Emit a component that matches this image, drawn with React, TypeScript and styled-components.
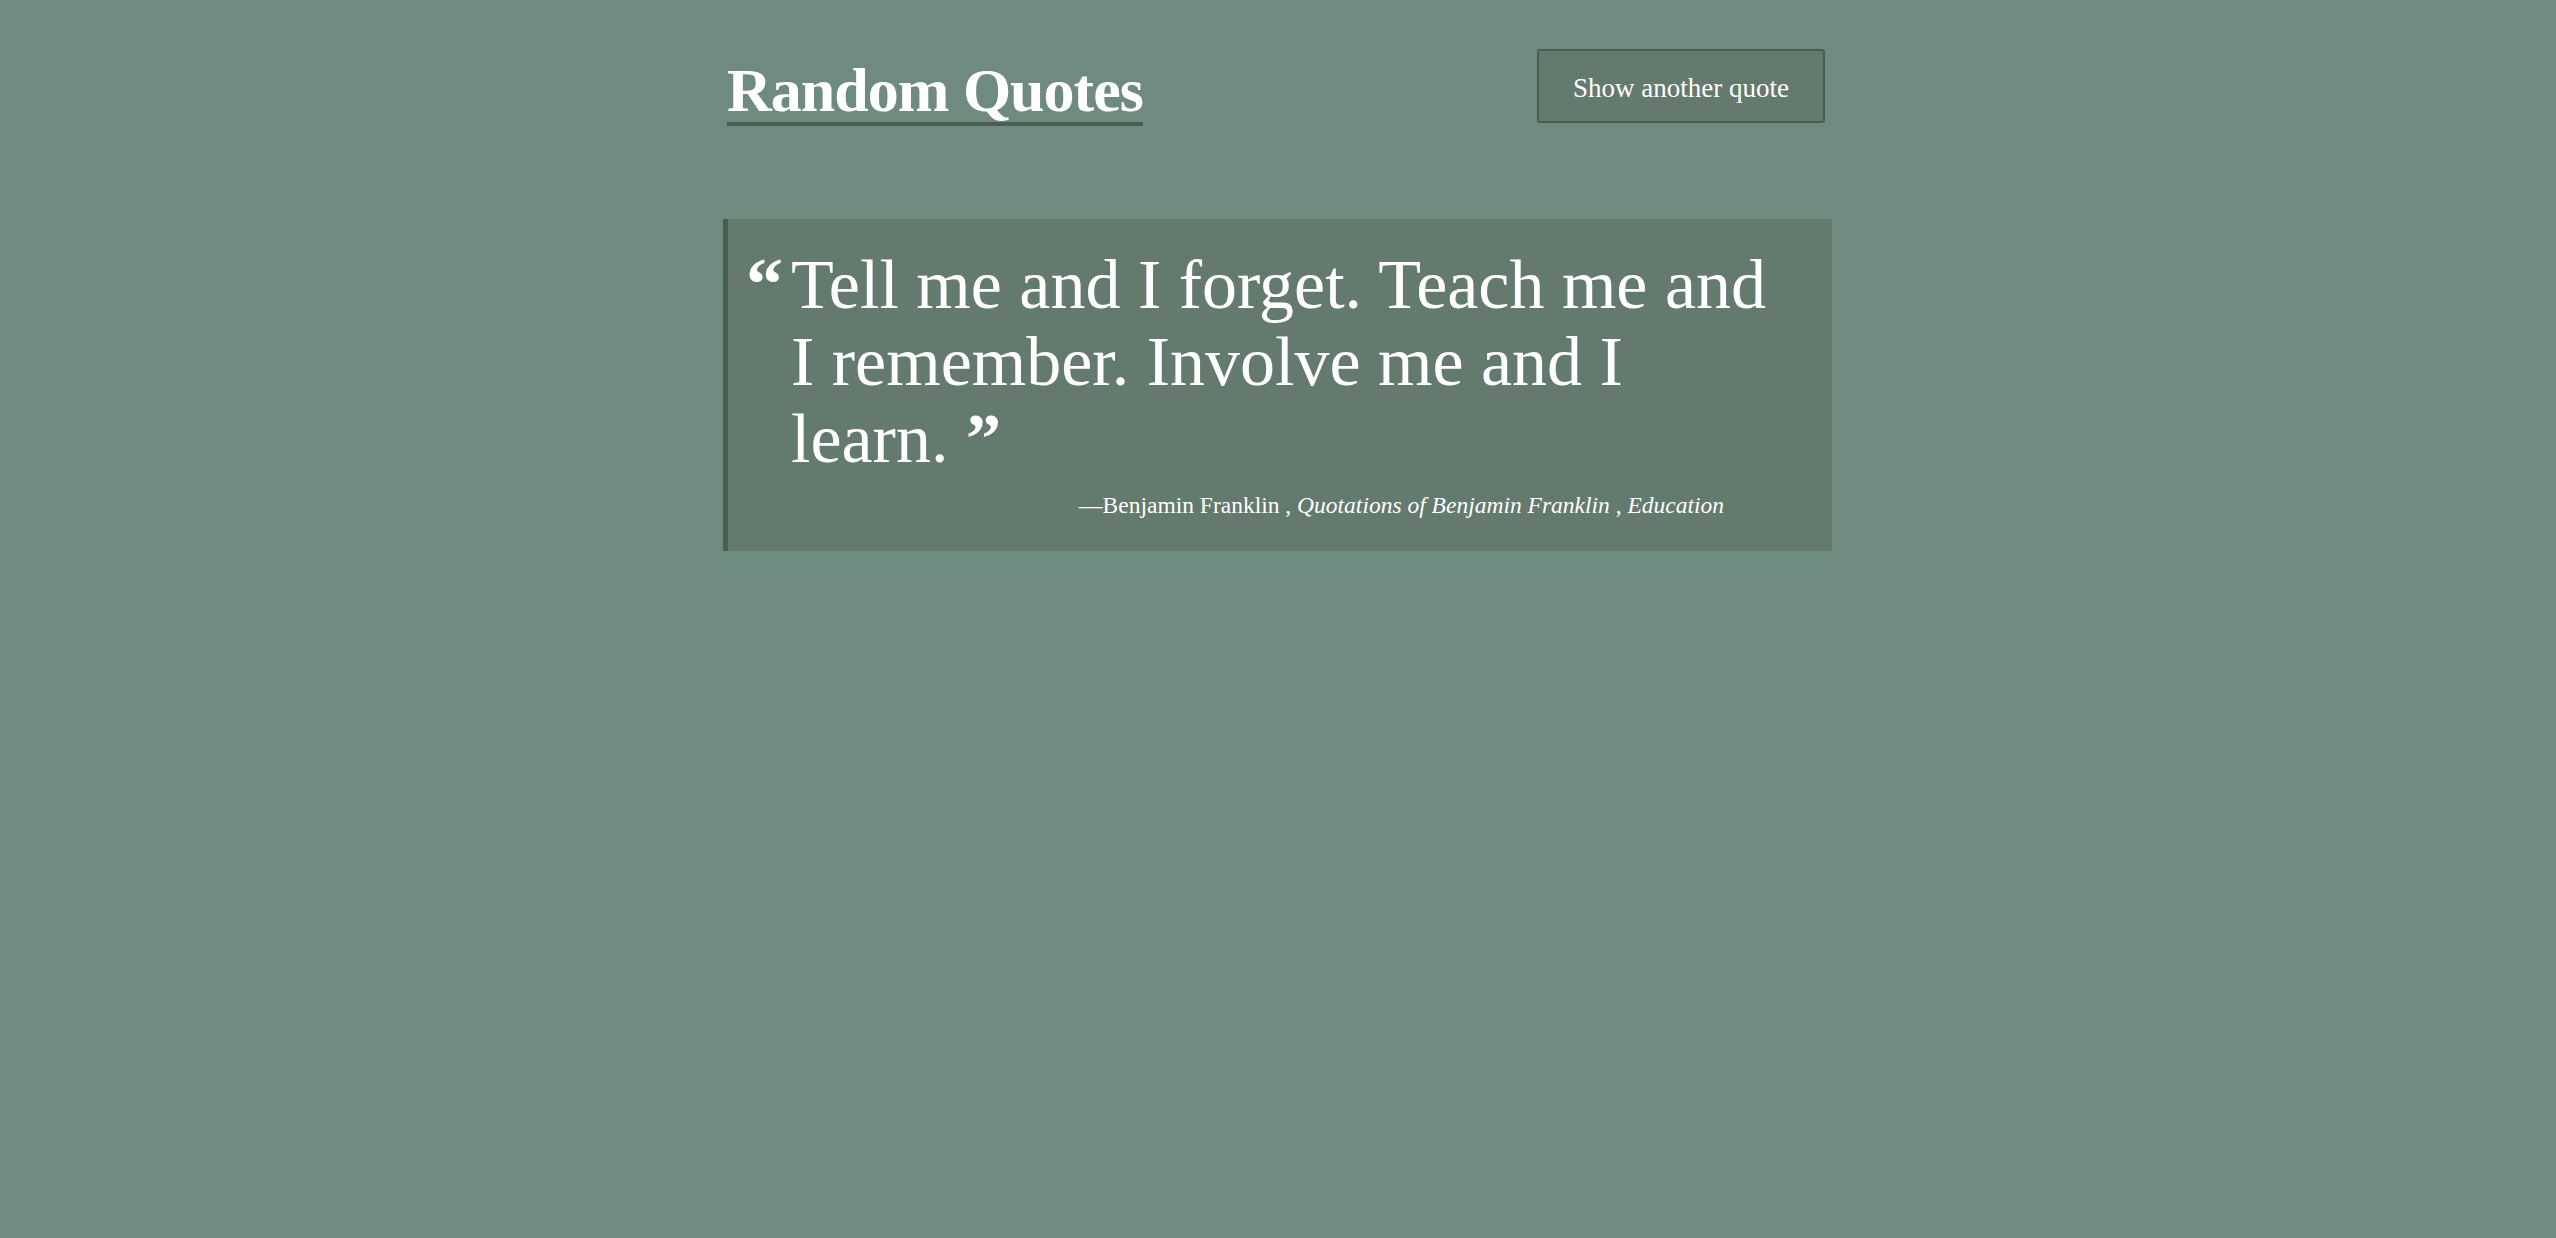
import React from "react";
import styled, { createGlobalStyle } from "styled-components";

const GlobalStyle = createGlobalStyle`
  html, body {
    margin: 0;
    padding: 0;
    background: #6f8a7e;
  }
  body {
    font-family: "Liberation Serif", "Times New Roman", serif;
    color: #ffffff;
  }
`;

const Page = styled.div`
  min-height: 1238px;
  background: #6f8a7e;
  padding-top: 49px;
  box-sizing: border-box;
`;

const Container = styled.main`
  width: 1110px;
  margin: 0 auto;
`;

const Header = styled.header`
  display: flex;
  justify-content: space-between;
  align-items: flex-start;
  padding: 0 8px 0 4px;
  margin-bottom: 93px;
`;

const Title = styled.h1`
  margin: 10px 0 0;
  padding: 0 0 1px;
  font-family: "Liberation Serif", "Times New Roman", serif;
  font-weight: 700;
  font-size: 62px;
  line-height: 62px;
  letter-spacing: -1px;
  color: #ffffff;
  border-bottom: 4px solid #4b5e54;
`;

const Button = styled.button`
  width: 288px;
  height: 74px;
  box-sizing: border-box;
  display: flex;
  align-items: center;
  justify-content: center;
  background: #657a6f;
  border: 2px solid #4b5e54;
  border-radius: 3px;
  color: #ffffff;
  font-family: "Liberation Serif", "Times New Roman", serif;
  font-size: 27px;
  padding: 4px 0 0;
  cursor: pointer;
`;

const QuoteCard = styled.blockquote`
  margin: 0 1px 0 0;
  background: #647a6f;
  border-left: 5px solid #4b5e54;
  border-radius: 0 3px 3px 0;
  padding: 27px 46px 30px 20px;
`;

const QuoteRow = styled.div`
  display: flex;
  align-items: flex-start;
`;

const OpenMark = styled.span`
  flex: 0 0 45px;
  margin-left: -2px;
  font-family: "Liberation Serif", "Times New Roman", serif;
  font-weight: 700;
  font-size: 74px;
  line-height: 77px;
  color: #ffffff;
`;

const QuoteText = styled.p`
  margin: 0;
  flex: 1;
  font-family: "Liberation Serif", "Times New Roman", serif;
  font-size: 70px;
  line-height: 77px;
  color: #ffffff;
`;

const CloseMark = styled.span`
  font-weight: 700;
`;

const Attribution = styled.footer`
  margin: 13px 62px 0 0;
  text-align: right;
  font-family: "Liberation Serif", "Times New Roman", serif;
  font-size: 23.5px;
  line-height: 31px;
  color: #ffffff;
`;

const Source = styled.cite`
  font-style: italic;
`;

export default function App() {
  return (
    <>
      <GlobalStyle />
      <Page>
        <Container>
          <Header>
            <Title>Random Quotes</Title>
            <Button type="button">Show another quote</Button>
          </Header>
          <QuoteCard>
            <QuoteRow>
              <OpenMark>“</OpenMark>
              <QuoteText>
                Tell me and I forget. Teach me and I remember. Involve me and I learn.{" "}
                <CloseMark>”</CloseMark>
              </QuoteText>
            </QuoteRow>
            <Attribution>
              —Benjamin Franklin , <Source>Quotations of Benjamin Franklin</Source> ,{" "}
              <Source>Education</Source>
            </Attribution>
          </QuoteCard>
        </Container>
      </Page>
    </>
  );
}
